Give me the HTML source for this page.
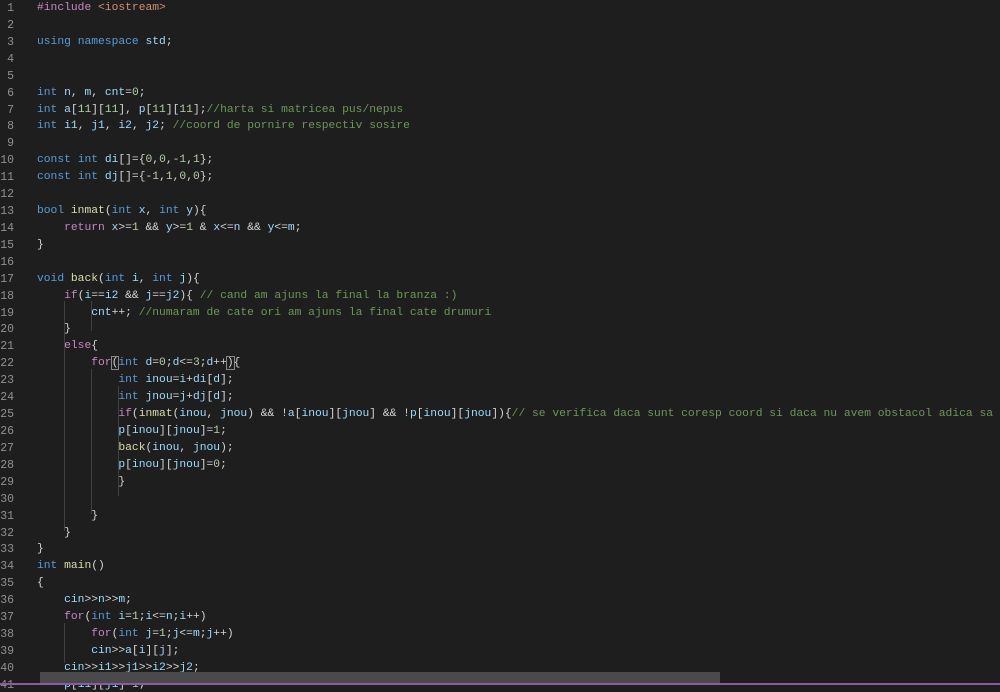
<!DOCTYPE html><html><head><style>
body{margin:0;width:1000px;height:685px;overflow:hidden;background:#1e1e1e;position:relative;font-family:"Liberation Mono",monospace;font-size:11.3px}
.ln{position:absolute;left:0;width:14px;text-align:right;color:#909090;font-size:11.5px}
.c{position:absolute;left:37px;white-space:pre;color:#d4d4d4}
.k{color:#569cd6}.p{color:#c586c0}.f{color:#dcdcaa}.v{color:#9cdcfe}.n{color:#b5cea8}.g{color:#6a9955}.s{color:#ce9178}
.gd{position:absolute;width:1px;background:#404040}
</style></head><body>
<div id="w"></div>
<div class="gd" style="left:64px;top:301px;height:230px"></div>
<div class="gd" style="left:91px;top:369px;height:145px"></div>
<div class="gd" style="left:91px;top:301px;height:30px"></div>
<div class="gd" style="left:118px;top:386px;height:110px"></div>
<div class="gd" style="left:64px;top:623px;height:40px"></div>
<script>
const L=[
'<span class="p">#include</span> <span class="s">&lt;iostream&gt;</span>','',
'<span class="k">using</span> <span class="k">namespace</span> <span class="v">std</span>;','','',
'<span class="k">int</span> <span class="v">n</span>, <span class="v">m</span>, <span class="v">cnt</span>=<span class="n">0</span>;',
'<span class="k">int</span> <span class="v">a</span>[<span class="n">11</span>][<span class="n">11</span>], <span class="v">p</span>[<span class="n">11</span>][<span class="n">11</span>];<span class="g">//harta si matricea pus/nepus</span>',
'<span class="k">int</span> <span class="v">i1</span>, <span class="v">j1</span>, <span class="v">i2</span>, <span class="v">j2</span>; <span class="g">//coord de pornire respectiv sosire</span>','',
'<span class="k">const</span> <span class="k">int</span> <span class="v">di</span>[]={<span class="n">0</span>,<span class="n">0</span>,-<span class="n">1</span>,<span class="n">1</span>};',
'<span class="k">const</span> <span class="k">int</span> <span class="v">dj</span>[]={-<span class="n">1</span>,<span class="n">1</span>,<span class="n">0</span>,<span class="n">0</span>};','',
'<span class="k">bool</span> <span class="f">inmat</span>(<span class="k">int</span> <span class="v">x</span>, <span class="k">int</span> <span class="v">y</span>){',
'    <span class="p">return</span> <span class="v">x</span>&gt;=<span class="n">1</span> &amp;&amp; <span class="v">y</span>&gt;=<span class="n">1</span> &amp; <span class="v">x</span>&lt;=<span class="v">n</span> &amp;&amp; <span class="v">y</span>&lt;=<span class="v">m</span>;',
'}','',
'<span class="k">void</span> <span class="f">back</span>(<span class="k">int</span> <span class="v">i</span>, <span class="k">int</span> <span class="v">j</span>){',
'    <span class="p">if</span>(<span class="v">i</span>==<span class="v">i2</span> &amp;&amp; <span class="v">j</span>==<span class="v">j2</span>){ <span class="g">// cand am ajuns la final la branza :)</span>',
'        <span class="v">cnt</span>++; <span class="g">//numaram de cate ori am ajuns la final cate drumuri</span>',
'    }',
'    <span class="p">else</span>{',
'        <span class="p">for</span><span style="outline:1px solid #888">(</span><span class="k">int</span> <span class="v">d</span>=<span class="n">0</span>;<span class="v">d</span>&lt;=<span class="n">3</span>;<span class="v">d</span>++<span style="outline:1px solid #888">)</span>{',
'            <span class="k">int</span> <span class="v">inou</span>=<span class="v">i</span>+<span class="v">di</span>[<span class="v">d</span>];',
'            <span class="k">int</span> <span class="v">jnou</span>=<span class="v">j</span>+<span class="v">dj</span>[<span class="v">d</span>];',
'            <span class="p">if</span>(<span class="f">inmat</span>(<span class="v">inou</span>, <span class="v">jnou</span>) &amp;&amp; !<span class="v">a</span>[<span class="v">inou</span>][<span class="v">jnou</span>] &amp;&amp; !<span class="v">p</span>[<span class="v">inou</span>][<span class="v">jnou</span>]){<span class="g">// se verifica daca sunt coresp coord si daca nu avem obstacol adica sa</span>',
'            <span class="v">p</span>[<span class="v">inou</span>][<span class="v">jnou</span>]=<span class="n">1</span>;',
'            <span class="f">back</span>(<span class="v">inou</span>, <span class="v">jnou</span>);',
'            <span class="v">p</span>[<span class="v">inou</span>][<span class="v">jnou</span>]=<span class="n">0</span>;',
'            }','',
'        }',
'    }',
'}',
'<span class="k">int</span> <span class="f">main</span>()',
'{',
'    <span class="v">cin</span>&gt;&gt;<span class="v">n</span>&gt;&gt;<span class="v">m</span>;',
'    <span class="p">for</span>(<span class="k">int</span> <span class="v">i</span>=<span class="n">1</span>;<span class="v">i</span>&lt;=<span class="v">n</span>;<span class="v">i</span>++)',
'        <span class="p">for</span>(<span class="k">int</span> <span class="v">j</span>=<span class="n">1</span>;<span class="v">j</span>&lt;=<span class="v">m</span>;<span class="v">j</span>++)',
'        <span class="v">cin</span>&gt;&gt;<span class="v">a</span>[<span class="v">i</span>][<span class="v">j</span>];',
'    <span class="v">cin</span>&gt;&gt;<span class="v">i1</span>&gt;&gt;<span class="v">j1</span>&gt;&gt;<span class="v">i2</span>&gt;&gt;<span class="v">j2</span>;',
'    <span class="v">p</span>[<span class="v">i1</span>][<span class="v">j1</span>]=<span class="n">1</span>;'];
let h='';L.forEach((s,i)=>{const t=2+i*16.92;h+=`<div class="ln" style="top:${t}px">${i+1}</div><div class="c" style="top:${t}px">${s}</div>`;});
document.getElementById('w').innerHTML=h;
</script>
<div style="position:absolute;left:40px;top:672px;width:680px;height:11px;background:#4a4a4a"></div>
<div style="position:absolute;left:0;top:683px;width:1000px;height:2px;background:#8a5aa8"></div>
</body></html>
